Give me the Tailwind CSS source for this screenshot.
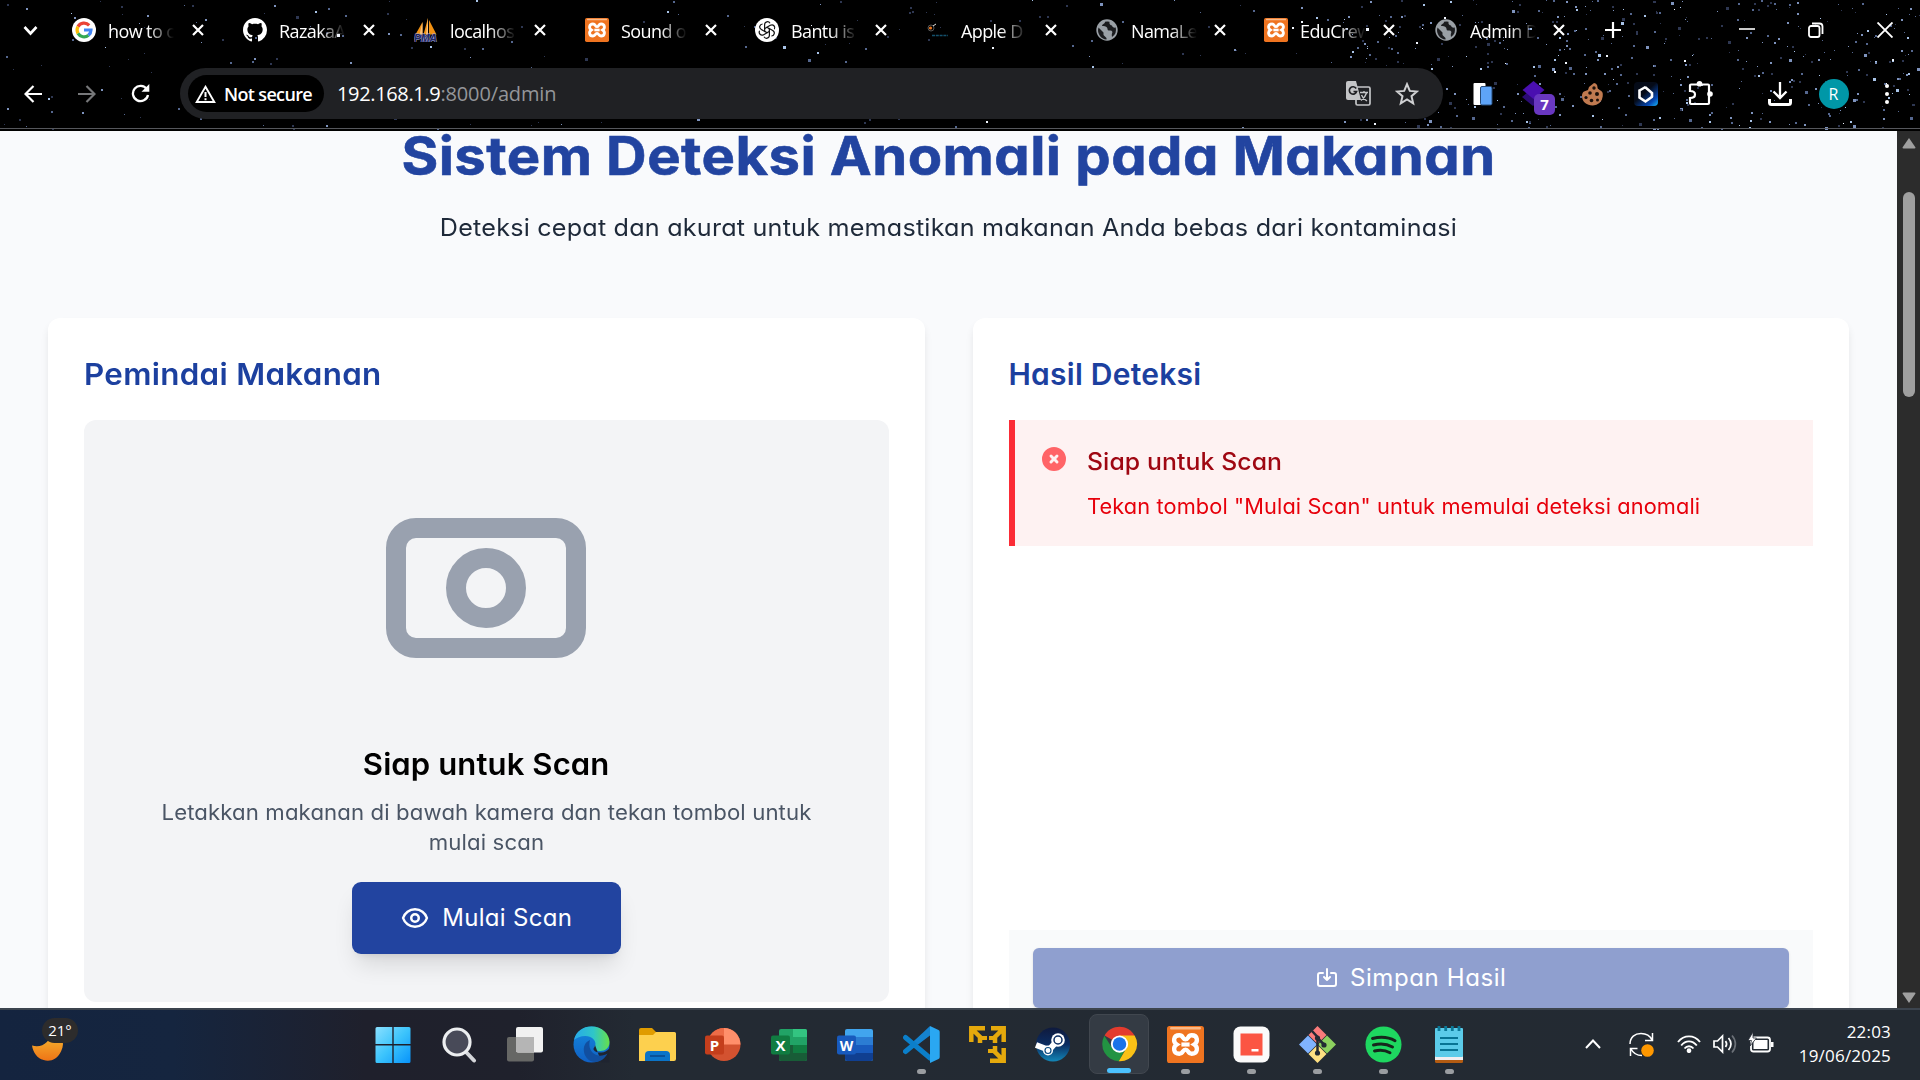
<!DOCTYPE html>
<html lang="id">
<head>
<meta charset="utf-8">
<title>Admin Dashboard</title>
<script src="https://cdn.jsdelivr.net/npm/@tailwindcss/browser@4"></script>
</head>
<body class="w-[1920px] h-[1080px] overflow-hidden flex flex-col bg-black [font-family:'Open_Sans',sans-serif]">

<svg class="hidden">
  <defs>
    <symbol id="x" viewBox="0 0 12 12"><path d="M1 1l10 10M11 1L1 11" stroke="#fff" stroke-width="2.2" fill="none"/></symbol>
    <symbol id="globe" viewBox="0 0 24 24"><circle cx="12" cy="12" r="10.7" fill="#9aa0a6"/><path d="M3.5 9.500l5 5v2.500l3 3v1.500a9.300 9.300 0 0 1-8-12zM10 3.800c0 2.200-2.500 1.800-3 4.200 2 0 4 0 5 1.500 1 1.500 0 3.500 2.500 3 2.500-.5 3.500 1 2.500 3-.5 1.500 0 2.500 0 3.500a8.800 8.800 0 0 0 3.700-9.500C19 10 17 9 17 7.500c-1.500 0-3-1-2.500-3.700A9 9 0 0 0 10 3.800z" fill="#1b1c1f"/></symbol>
    <symbol id="xampp" viewBox="0 0 36 36"><rect width="36" height="36" rx="2.500" fill="#ef7420"/><rect x="3" y="1" width="30" height="2.500" rx="1" fill="#f9b987"/><path d="M12 9c-6 0-6.500 6.500-2.500 9-4 2.500-3.500 9 2.500 9 4 0 3-4 6-4s2 4 6 4c6 0 6.500-6.500 2.500-9 4-2.500 3.500-9-2.500-9-4 0-3 4-6 4s-2-4-6-4z" fill="none" stroke="#fff" stroke-width="4.200"/><path d="M14 18h8" stroke="#fff" stroke-width="4"/></symbol>
  </defs>
</svg>

<header class="relative h-[131px] shrink-0 bg-black border-b border-black overflow-hidden">
  <svg id="stars" class="absolute inset-0 w-full h-[131px]" viewBox="0 0 1920 131"></svg>
  <div class="relative h-[129px] flex flex-col border-b border-[#55575c] text-white">
    <div class="h-[60px] flex items-center">
      <div class="w-[72px] pl-[23px]"><svg class="w-[15px] h-[11px] mt-px" viewBox="0 0 15 11"><path d="M1.500 2l6 6.500 6-6.500" fill="none" stroke="#fff" stroke-width="2.600"/></svg></div>
      <div class="flex text-[18px] tracking-[-0.6px] leading-[26px]">
        <div class="w-[171px] flex items-center">
          <svg class="size-6" viewBox="0 0 24 24"><circle cx="12" cy="12" r="12" fill="#fff"/><g fill="none" stroke-width="3.200"><path d="M17.200 7.300A7 7 0 0 0 6 8.600" stroke="#ea4335"/><path d="M6 8.600a7 7 0 0 0 0 6.800" stroke="#fbbc05"/><path d="M6 15.400a7 7 0 0 0 10.500 1.900" stroke="#34a853"/><path d="M12 12h7a7 7 0 0 1-2.500 5.300" stroke="#4285f4"/></g></svg>
          <span class="ml-3 mt-[3px] w-[66px] overflow-hidden whitespace-nowrap [mask-image:linear-gradient(to_right,black_60%,transparent)]">how to c</span>
          <svg class="size-3 ml-[18px]"><use href="#x"/></svg>
        </div>
        <div class="w-[171px] flex items-center">
          <svg class="size-6" viewBox="0 0 16 16"><path fill="#fff" d="M8 0C3.580 0 0 3.580 0 8c0 3.540 2.290 6.530 5.470 7.590.4.070.55-.17.55-.38 0-.19-.01-.82-.01-1.490-2.010.37-2.530-.49-2.690-.94-.09-.23-.48-.94-.82-1.130-.28-.15-.68-.52-.01-.53.63-.01 1.080.58 1.230.82.72 1.210 1.870.87 2.330.66.07-.52.28-.87.51-1.070-1.780-.2-3.640-.89-3.640-3.950 0-.87.31-1.590.82-2.150-.08-.2-.36-1.020.08-2.120 0 0 .67-.21 2.200.82.64-.18 1.320-.27 2-.27s1.360.09 2 .27c1.530-1.040 2.200-.82 2.200-.82.44 1.100.16 1.920.08 2.120.51.56.82 1.270.82 2.150 0 3.070-1.870 3.750-3.650 3.950.29.25.54.73.54 1.480 0 1.070-.01 1.930-.01 2.200 0 .21.15.46.55.38A8.010 8.010 0 0 0 16 8c0-4.420-3.580-8-8-8z"/></svg>
          <span class="ml-3 mt-[3px] w-[66px] overflow-hidden whitespace-nowrap [mask-image:linear-gradient(to_right,black_60%,transparent)]">RazakaA</span>
          <svg class="size-3 ml-[18px]"><use href="#x"/></svg>
        </div>
        <div class="w-[171px] flex items-center">
          <svg class="size-6" viewBox="0 0 24 24"><path d="M1.500 16.500L8.500 4v12.500zM9.500 16.500L14 0v16.500zM15 16.500V2l7.500 14.500z" fill="#f29111"/><path d="M8.500 4v12.500H5.500zM14 0v16.500h-2z" fill="#f9c27c"/><text x="0" y="24" font-family="Liberation Sans" font-style="italic" font-weight="700" font-size="10" letter-spacing="0" fill="#1d2560" stroke="#9fa6d8" stroke-width="1" paint-order="stroke" textLength="23" lengthAdjust="spacingAndGlyphs">PMA</text></svg>
          <span class="ml-3 mt-[3px] w-[66px] overflow-hidden whitespace-nowrap [mask-image:linear-gradient(to_right,black_60%,transparent)]">localhos</span>
          <svg class="size-3 ml-[18px]"><use href="#x"/></svg>
        </div>
        <div class="w-[170px] flex items-center">
          <svg class="size-6"><use href="#xampp"/></svg>
          <span class="ml-3 mt-[3px] w-[66px] overflow-hidden whitespace-nowrap [mask-image:linear-gradient(to_right,black_60%,transparent)]">Sound o</span>
          <svg class="size-3 ml-[18px]"><use href="#x"/></svg>
        </div>
        <div class="w-[170px] flex items-center">
          <svg class="size-6" viewBox="0 0 24 24"><circle cx="12" cy="12" r="12" fill="#fff"/><g fill="none" stroke="#111" stroke-width="1.200"><path id="petal" d="M12 9.300l-2.400 1.400V6.800c0-3.400 4-4 5.400-1.600"/><use href="#petal" transform="rotate(60 12 12)"/><use href="#petal" transform="rotate(120 12 12)"/><use href="#petal" transform="rotate(180 12 12)"/><use href="#petal" transform="rotate(240 12 12)"/><use href="#petal" transform="rotate(300 12 12)"/></g></svg>
          <span class="ml-3 mt-[3px] w-[66px] overflow-hidden whitespace-nowrap [mask-image:linear-gradient(to_right,black_60%,transparent)]">Bantu is</span>
          <svg class="size-3 ml-[18px]"><use href="#x"/></svg>
        </div>
        <div class="w-[170px] flex items-center">
          <svg class="size-6" viewBox="0 0 24 24"><circle cx="6" cy="10" r="3" fill="none" stroke="#555" stroke-width="1"/><circle cx="5.500" cy="10" r="1.600" fill="#e8741d"/><path d="M8 8l3-2" stroke="#ddd"/><path d="M7 17.500h16" stroke="#14506b" stroke-width="1.600" stroke-dasharray="3 .8"/></svg>
          <span class="ml-3 mt-[3px] w-[66px] overflow-hidden whitespace-nowrap [mask-image:linear-gradient(to_right,black_60%,transparent)]">Apple D</span>
          <svg class="size-3 ml-[18px]"><use href="#x"/></svg>
        </div>
        <div class="w-[169px] flex items-center">
          <svg class="size-6"><use href="#globe"/></svg>
          <span class="ml-3 mt-[3px] w-[66px] overflow-hidden whitespace-nowrap [mask-image:linear-gradient(to_right,black_60%,transparent)]">NamaLe</span>
          <svg class="size-3 ml-[17px]"><use href="#x"/></svg>
        </div>
        <div class="w-[170px] flex items-center">
          <svg class="size-6"><use href="#xampp"/></svg>
          <span class="ml-3 mt-[3px] w-[66px] overflow-hidden whitespace-nowrap [mask-image:linear-gradient(to_right,black_60%,transparent)]">EduCrew</span>
          <svg class="size-3 ml-[17px]"><use href="#x"/></svg>
        </div>
        <div class="w-[170px] flex items-center">
          <svg class="size-6"><use href="#globe"/></svg>
          <span class="ml-3 mt-[3px] w-[66px] overflow-hidden whitespace-nowrap [mask-image:linear-gradient(to_right,black_60%,transparent)]">Admin D</span>
          <svg class="size-3 ml-[17px]"><use href="#x"/></svg>
        </div>
      </div>
      <svg class="size-4 ml-[1px]" viewBox="0 0 16 16"><path d="M8 0v16M0 8h16" stroke="#fff" stroke-width="2.200"/></svg>
      <svg class="w-4 h-4 ml-[118px]" viewBox="0 0 16 16"><path d="M0 7h16" stroke="#fff" stroke-width="1.600"/></svg>
      <svg class="w-4 h-4 ml-[53px]" viewBox="0 0 16 16" fill="none" stroke="#fff" stroke-width="1.800"><rect x="1" y="4" width="10.500" height="11" rx="2"/><path d="M4 1.500h7.500a3 3 0 0 1 3 3V12"/></svg>
      <svg class="w-4 h-4 ml-[53px]" viewBox="0 0 16 16"><path d="M.5.5l15 15M15.500.5l-15 15" stroke="#fff" stroke-width="1.900"/></svg>
    </div>

    <div class="h-[69px] flex items-center">
      <div class="w-[180px] flex items-center pl-6">
        <svg class="w-[18px] h-[18px]" viewBox="0 0 18 18" fill="none" stroke="#fff" stroke-width="2.200"><path d="M18 9H2M9.500 1L1.500 9l8 8"/></svg>
        <svg class="w-[18px] h-[18px] ml-9" viewBox="0 0 18 18" fill="none" stroke="#77787a" stroke-width="2.200"><path d="M0 9h16M8.500 1l8 8-8 8"/></svg>
        <svg class="w-[19px] h-[19px] ml-[35px]" viewBox="0 0 19 19"><path d="M15.800 5.200A7.600 7.600 0 1 0 17 11" fill="none" stroke="#fff" stroke-width="2.300"/><path d="M18.300 0v7.800h-7.800z" fill="#fff"/></svg>
      </div>
      <div class="w-[1263px] h-[51px] rounded-full bg-[#202124] flex items-center pl-2 pr-6">
        <div class="w-[136px] h-[37px] rounded-full bg-black flex items-center pl-[7px]">
          <svg class="w-[21px] h-[18px]" viewBox="0 0 21 18"><path d="M10.500 1.800L19.300 17H1.700z" fill="none" stroke="#fff" stroke-width="1.900"/><path d="M10.500 7v5M10.500 13.300v2" stroke="#fff" stroke-width="2"/></svg>
          <span class="ml-2 mt-px text-[18px] leading-6 font-semibold tracking-[-0.65px] whitespace-nowrap">Not secure</span>
        </div>
        <span class="ml-[13px] mt-px text-[20px] leading-7 whitespace-nowrap tracking-[-0.35px]">192.168.1.9<span class="text-[#94969a] tracking-[-0.14px]">:8000/admin</span></span>
        <svg class="w-[25px] h-[25px] ml-auto" viewBox="0 0 25 25"><rect x="10" y="6" width="14" height="18" rx="1.500" fill="none" stroke="#c4c5c7" stroke-width="1.700"/><path d="M2 0h8l5 19H2a2 2 0 0 1-2-2V2a2 2 0 0 1 2-2z" fill="#c4c5c7"/><path d="M10.200 7.500a3.700 3.700 0 1 0 .4 3H7.500" fill="none" stroke="#202124" stroke-width="1.700"/><path d="M14 11.500h8M18 10v2M20.500 12c-1 3.500-3.500 6-5.500 7.500M15.500 14c1 2.500 3 4.500 5.500 6" stroke="#c4c5c7" stroke-width="1.400" fill="none"/></svg>
        <svg class="w-6 h-6 ml-6" viewBox="0 0 24 24"><path d="M12 2.200l2.800 6.700 7.200.6-5.500 4.700 1.700 7.100L12 17.500l-6.200 3.800 1.700-7.100L2 9.500l7.200-.6z" fill="none" stroke="#cfd0d2" stroke-width="2"/></svg>
      </div>
      <div class="ml-[13px] flex items-center">
        <div class="w-[53px] flex justify-center"><svg class="w-[20px] h-6" viewBox="0 0 20 24"><rect x=".5" y="1" width="12" height="22" rx="1" fill="#fff"/><rect x="7.500" y="4.500" width="11.500" height="18.500" rx="1.500" fill="#5ea4f8" stroke="#274b77"/></svg></div>
        <div class="w-[56px] flex justify-center"><svg class="w-[36px] h-[36px] mt-2 ml-1" viewBox="0 0 36 36"><path d="M12 8l11 9-11 9-11-9z" fill="#2b0b74"/><path d="M12.500 1l11 9-11 9-11-9z" fill="#4a0fb0"/><rect x="13" y="14" width="21" height="21" rx="5" fill="#6937c1"/><text x="23.500" y="30" text-anchor="middle" font-family="Open Sans" font-weight="700" font-size="15" fill="#fff">7</text></svg></div>
        <div class="w-[54px] flex justify-center"><svg class="w-[23px] h-6" viewBox="0 0 23 24"><path d="M13 1c2.500.5 3.500 2 3.500 4.500 0 1.500 1.500 2 3 3 2.500 1.500 2.500 3 2.200 6A9.800 9.800 0 0 1 11.500 23.500C6 23.500 1 20 1 14c0-2 .5-3.500 2-4.500l4-1.500 1-3z" fill="#c07a50"/><g fill="#1a0f0a"><circle cx="13" cy="6" r="1.700"/><circle cx="9" cy="11" r="1.800"/><circle cx="16" cy="12" r="2"/><circle cx="5" cy="15.500" r="1.600"/><circle cx="10.500" cy="18.500" r="1.800"/><circle cx="16.500" cy="18" r="1.500"/></g></svg></div>
        <div class="w-[54px] flex justify-center"><svg class="size-6" viewBox="0 0 24 24"><defs><linearGradient id="bl" x1=".2" y1=".1" x2="1" y2="1"><stop offset=".35" stop-color="#050b18"/><stop offset=".75" stop-color="#0648b4"/><stop offset="1" stop-color="#18b5f5"/></linearGradient></defs><rect width="24" height="24" rx="4" fill="url(#bl)"/><path d="M5.500 8.500L11.500 5M5.500 7.500v8l6 4 7-5" fill="none" stroke="#fff" stroke-width="2.600"/><path d="M11 5l7 6v4" fill="none" stroke="#fff" stroke-width="2.600"/></svg></div>
        <div class="w-[54px] flex justify-center"><svg class="w-[25px] h-[25px]" viewBox="0 0 25 25"><path d="M3 3.500h17a1 1 0 0 1 1 1V22a1 1 0 0 1-1 1H3a1 1 0 0 1-1-1v-5c4 0 5-1.500 5-3.500S6 10 2 10V4.500a1 1 0 0 1 1-1z" fill="none" stroke="#fff" stroke-width="2.200"/><circle cx="11.500" cy="2.800" r="2.800" fill="#fff"/><circle cx="22" cy="13" r="2.800" fill="#fff"/></svg></div>
        <div class="w-[54px] ml-[26px] flex justify-center"><svg class="w-6 h-6" viewBox="0 0 24 24" fill="none" stroke="#fff"><path d="M12 0v15M5.500 9.500L12 16l6.500-6.500" stroke-width="2.300"/><path d="M1.500 17v3.500a2 2 0 0 0 2 2h17a2 2 0 0 0 2-2V17" stroke-width="3"/></svg></div>
        <div class="w-[53px] flex justify-center"><div class="size-[30px] rounded-full bg-[#0097a7] flex items-center justify-center text-[16px] pt-px">R</div></div>
        <div class="w-[54px] flex flex-col items-center gap-1"><i class="size-1 rounded-full bg-white"></i><i class="size-1 rounded-full bg-white"></i><i class="size-1 rounded-full bg-white"></i></div>
      </div>
    </div>
  </div>
</header>

<main class="h-[877px] shrink-0 flex bg-[#f9fafc] overflow-hidden">
  <div class="w-[1897px] h-full overflow-hidden px-12 [font-family:Inter,sans-serif] [font-feature-settings:'cv11']">
    <h1 class="-mt-[7px] text-center text-[53px] leading-[64px] font-bold tracking-[0.4px] scale-x-[1.061] text-[#2244a0] [-webkit-text-stroke:0.6px_#2244a0]">Sistem Deteksi Anomali pada Makanan</h1>
    <p class="mt-[22px] text-center text-[24px] leading-9 tracking-[0.2px] scale-x-[1.048] text-[#1e2939]">Deteksi cepat dan akurat untuk memastikan makanan Anda bebas dari kontaminasi</p>
    <div class="mt-[72px] grid grid-cols-2 gap-12">
      <section class="h-[800px] bg-white rounded-xl shadow-[0_6px_9px_-1px_rgba(0,0,0,0.1)] p-9">
        <h2 class="-mt-px text-[30px] leading-[42px] font-semibold tracking-[0.3px] origin-left scale-x-[1.045] text-[#1c409f]">Pemindai Makanan</h2>
        <div class="mt-[25px] h-[582px] rounded-xl bg-[#f3f4f6] flex flex-col items-center pt-12 text-center">
          <svg class="size-[240px] shrink-0" viewBox="0 0 24 24" fill="none" stroke="#99a1af" stroke-width="2"><rect x="3" y="6" width="18" height="12" rx="2"/><circle cx="12" cy="12" r="3"/></svg>
          <h3 class="mt-[35px] text-[30px] leading-[42px] font-semibold tracking-[0.1px] scale-x-[1.035] text-black">Siap untuk Scan</h3>
          <p class="mt-[13px] text-[21px] leading-[30px] tracking-[0.1px] scale-x-[1.057] text-[#4a5565]">Letakkan makanan di bawah kamera dan tekan tombol untuk<br>mulai scan</p>
          <button class="mt-[24px] w-[269px] h-[72px] rounded-[9px] bg-[#2244a0] shadow-[0_15px_23px_-5px_rgba(0,0,0,0.12),0_6px_9px_-6px_rgba(0,0,0,0.12)] flex items-center justify-center text-white text-[24px] tracking-[0.3px]">
            <svg class="size-[30px] mr-3" viewBox="0 0 24 24" fill="none" stroke="#fff" stroke-width="2" stroke-linecap="round" stroke-linejoin="round"><path d="M15 12a3 3 0 11-6 0 3 3 0 016 0z"/><path d="M2.458 12C3.732 7.943 7.523 5 12 5c4.478 0 8.268 2.943 9.542 7-1.274 4.057-5.064 7-9.542 7-4.477 0-8.268-2.943-9.542-7z"/></svg>
            Mulai Scan
          </button>
        </div>
      </section>
      <section class="h-[800px] bg-white rounded-xl shadow-[0_6px_9px_-1px_rgba(0,0,0,0.1)] p-9">
        <h2 class="-mt-px text-[30px] leading-[42px] font-semibold tracking-[0.25px] text-[#1c409f]">Hasil Deteksi</h2>
        <div class="mt-[25px] h-[126px] bg-[#fef2f2] border-l-[6px] border-[#fb2c36] p-6 flex">
          <svg class="size-[30px] shrink-0" viewBox="0 0 20 20" fill="#ff6467"><path fill-rule="evenodd" clip-rule="evenodd" d="M10 18a8 8 0 100-16 8 8 0 000 16zM8.707 7.293a1 1 0 00-1.414 1.414L8.586 10l-1.293 1.293a1 1 0 101.414 1.414L10 11.414l1.293 1.293a1 1 0 001.414-1.414L11.414 10l1.293-1.293a1 1 0 00-1.414-1.414L10 8.586 8.707 7.293z"/></svg>
          <div class="ml-[18px] whitespace-nowrap">
            <h3 class="text-[24px] leading-9 font-medium tracking-[0.1px] origin-left scale-x-[1.032] text-[#9f0712]">Siap untuk Scan</h3>
            <p class="mt-3 text-[21px] leading-[30px] tracking-[0.1px] origin-left scale-x-[1.037] text-[#e7000b]">Tekan tombol "Mulai Scan" untuk memulai deteksi anomali</p>
          </div>
        </div>
        <div class="mt-[384px] h-[150px] bg-[#f9fafb] px-6 pt-[18px]">
          <button class="w-full h-[60px] rounded-md bg-[#8f9fcf] shadow-sm flex items-center justify-center text-white text-[24px] tracking-[0.6px]">
            <svg class="size-6 mr-[11px]" viewBox="0 0 24 24" fill="none" stroke="#fff" stroke-width="2" stroke-linecap="round" stroke-linejoin="round"><path d="M8 7H5a2 2 0 00-2 2v9a2 2 0 002 2h14a2 2 0 002-2V9a2 2 0 00-2-2h-3M15 11l-3 3m0 0l-3-3m3 3V3"/></svg>
            Simpan Hasil
          </button>
        </div>
      </section>
    </div>
  </div>
  <div class="w-[23px] h-full bg-[#2c2c2c] flex flex-col items-center">
    <svg class="w-3.5 h-3 mt-[6px]" viewBox="0 0 14 12"><path d="M7 1l6.500 9.500a1 1 0 0 1-1 1h-11a1 1 0 0 1-1-1z" fill="#9f9f9f"/></svg>
    <div class="mt-[43px] w-3 h-[205px] rounded-full bg-[#9f9f9f]"></div>
    <svg class="w-3.5 h-3 mt-auto mb-[4px]" viewBox="0 0 14 12"><path d="M7 11L.5 1.500a1 1 0 0 1 1-1h11a1 1 0 0 1 1 1z" fill="#9f9f9f"/></svg>
  </div>
</main>

<footer class="h-[72px] shrink-0 flex items-start border-t-2 border-[#3c444e] bg-[linear-gradient(to_right,#14243f_0%,#15253f_9%,#1f202c_19%,#1f212c_27%,#232a33_33%,#232a32_100%)] text-white">
  <div class="w-[360px] h-[70px] relative">
    <svg class="absolute left-[31px] top-[20px] w-[35px] h-[32px]" viewBox="0 0 36 33"><defs><linearGradient id="mn" x2="0" y2="1"><stop stop-color="#f7c234"/><stop offset="1" stop-color="#ee7416"/></linearGradient></defs><path d="M22 0c9 3 14 12 9 22C27 31 19 33 13 31 6 29 2 23 1 16c10 3 19-3 21-16z" fill="url(#mn)"/></svg>
    <span class="absolute left-[42px] top-[8px] w-[36px] h-[25px] rounded-full bg-[#2d2c2c] text-[15px] leading-[25px] text-center">21°</span>
  </div>
  <div class="flex h-[70px]">
    <div class="w-[66px] pt-[17px] flex flex-col items-center"><svg class="w-[36px] h-[36px]" viewBox="0 0 36 36"><defs><linearGradient id="wn" x2="1" y2="1"><stop stop-color="#8ae0ff"/><stop offset=".5" stop-color="#3cc4fc"/><stop offset="1" stop-color="#0793fb"/></linearGradient></defs><path d="M2 0h15.300v17H.5V1.500A1.500 1.500 0 0 1 2 0zM18.700 0H34a1.500 1.500 0 0 1 1.500 1.500V17H18.700zM.5 18.500h16.800V36H2a1.500 1.500 0 0 1-1.500-1.500zM18.700 18.500h16.800v16A1.500 1.500 0 0 1 34 36H18.700z" fill="url(#wn)"/></svg></div>
    <div class="w-[66px] pt-[17px] flex flex-col items-center"><svg class="w-[36px] h-[36px]" viewBox="0 0 36 36"><path d="M25 25l8 8.500" stroke="#d4d6da" stroke-width="4" stroke-linecap="round"/><circle cx="16" cy="15" r="13" fill="#484a58" stroke="#eceef0" stroke-width="3.200"/></svg></div>
    <div class="w-[66px] pt-[17px] flex flex-col items-center"><svg class="w-[36px] h-[36px]" viewBox="0 0 36 36"><rect x="0" y="10" width="27" height="24.500" rx="2" fill="#666765"/><rect x="9" y="0" width="27" height="25.500" rx="2" fill="#f1f1f1"/><path d="M9 10h18v15.500H11a2 2 0 0 1-2-2z" fill="#b5b5b5"/></svg></div>
    <div class="w-[66px] pt-[16px] flex flex-col items-center"><svg class="w-[37px] h-[37px]" viewBox="0 0 37 37"><defs><linearGradient id="e1"><stop stop-color="#27a9ea"/><stop offset=".55" stop-color="#2fc6c8"/><stop offset="1" stop-color="#66e04a"/></linearGradient><linearGradient id="e2" x2="0" y2="1"><stop stop-color="#1488dd"/><stop offset="1" stop-color="#1060c4"/></linearGradient></defs><circle cx="18.500" cy="18.500" r="18" fill="url(#e2)"/><path d="M1 14C3 5 10 .5 18.500.5 29 .5 36.500 8 36.500 16c0 6-4.500 9-9 9-4 0-6.500-1.500-6.500-3 0-1 1.500-2 1.500-4 0-4-4-8-10-8-5 0-9 2-11.500 4z" fill="url(#e1)"/><path d="M22 19c0 2-1.500 2.500-1.500 4 0 2 4 4 8 3.500 3 0 5-1.500 8-4v14h-8z" fill="#1f2430"/><path d="M17 14c-5 2-7 7-6 12 1 6 6 10 11 10 6 0 10-4 12.500-8.500-4 2.500-9 3-13 .5-5-3-6-9-4.500-14z" fill="#114fa0"/></svg></div>
    <div class="w-[66px] pt-[18px] flex flex-col items-center"><svg class="w-[37px] h-[34px]" viewBox="0 0 37 34"><path d="M0 2a2 2 0 0 1 2-2h11l4 4h18v6H0z" fill="#e09c00"/><path d="M0 7h14l3-3h18.500A1.500 1.500 0 0 1 37 5.500V31a2 2 0 0 1-2 2H0z" fill="#fdd04e"/><path d="M6 33v-6a4 4 0 0 1 4-4h17a4 4 0 0 1 4 4v6z" fill="#0b74c8"/><path d="M11 28h15" stroke="#0a4f94" stroke-width="1.800"/></svg></div>
    <div class="w-[66px] pt-[18px] flex flex-col items-center"><svg class="w-[36px] h-[34px]" viewBox="0 0 36 34"><circle cx="19" cy="16.500" r="16.500" fill="#d35230"/><path d="M19 0a16.500 16.500 0 0 1 16.500 16.500H19z" fill="#ff8f6b"/><path d="M19 0a16.500 16.500 0 0 0-16.500 16.500H19z" fill="#ed6c47"/><rect y="7.500" width="19" height="19" rx="2" fill="#c43e1c"/><text x="9.500" y="22.500" text-anchor="middle" font-family="Open Sans" font-weight="700" font-size="15" fill="#fff">P</text></svg></div>
    <div class="w-[66px] pt-[18px] flex flex-col items-center"><svg class="w-[36px] h-[34px]" viewBox="0 0 36 34"><rect x="8" y="1" width="28" height="32" rx="2" fill="#21a366"/><path d="M22 1h12a2 2 0 0 1 2 2v6H22z" fill="#33c481"/><path d="M8 17h14v8H8z" fill="#185c37"/><path d="M22 17h14v8H22z" fill="#107c41"/><path d="M8 25h28v6a2 2 0 0 1-2 2H10a2 2 0 0 1-2-2z" fill="#185c37"/><rect y="7.500" width="19" height="19" rx="2" fill="#107c41"/><text x="9.500" y="22.500" text-anchor="middle" font-family="Open Sans" font-weight="700" font-size="15" fill="#fff">X</text></svg></div>
    <div class="w-[66px] pt-[18px] flex flex-col items-center"><svg class="w-[36px] h-[34px]" viewBox="0 0 36 34"><rect x="8" y="1" width="28" height="32" rx="2" fill="#41a5ee"/><path d="M8 9h28v8H8z" fill="#2b7cd3"/><path d="M8 17h28v8H8z" fill="#185abd"/><path d="M8 25h28v6a2 2 0 0 1-2 2H10a2 2 0 0 1-2-2z" fill="#103f91"/><rect y="7.500" width="19" height="19" rx="2" fill="#185abd"/><text x="9.500" y="22.500" text-anchor="middle" font-family="Open Sans" font-weight="700" font-size="14" fill="#fff">W</text></svg></div>
    <div class="w-[66px] pt-[16px] flex flex-col items-center"><svg class="w-[37px] h-[37px]" viewBox="0 0 37 37"><path d="M2.500 11.500L27 32M2.500 25.500L27 5" stroke="#0b7fca" stroke-width="5" stroke-linecap="round"/><path d="M27 0l8.500 4a2 2 0 0 1 1.200 2v25a2 2 0 0 1-1.200 2L27 37z" fill="#2aa7f2"/><path d="M27 0v9.500L15 18.500l-4-3.500z" fill="#1583cf"/></svg><i class="mt-[6px] w-[9px] h-[5px] rounded-full bg-[#9a9da1]"></i></div>
    <div class="w-[66px] pt-[16px] flex flex-col items-center"><svg class="w-[37px] h-[37px]" viewBox="0 0 37 37" fill="none" stroke="#e5a90c" stroke-width="4.500"><path d="M2.300 16V2.300H16M3 3l8 8v6M22 2.300h12.700V16M34 3l-8 8v6M34.700 22v12.700H21M34 34l-8-8v-6"/><path d="M11 12h7M20 12h7M19 25h7" stroke-width="4"/></svg></div>
    <div class="w-[66px] pt-[17px] flex flex-col items-center"><svg class="w-[36px] h-[35px]" viewBox="0 0 36 35"><defs><linearGradient id="st" x2="0" y2="1"><stop stop-color="#0f1a3d"/><stop offset=".5" stop-color="#0b2c61"/><stop offset="1" stop-color="#1387b8"/></linearGradient></defs><circle cx="18" cy="17.500" r="17" fill="url(#st)"/><path d="M1 18l13 5 8-9" stroke="#fff" stroke-width="6" fill="none"/><circle cx="13" cy="23.500" r="5" fill="#fff"/><circle cx="23" cy="13" r="6.800" fill="#fff"/><circle cx="23" cy="13" r="4" fill="#fff" stroke="#0b2c61" stroke-width="1.500"/><circle cx="13" cy="23.500" r="3" fill="none" stroke="#0b4a80" stroke-width="1.200"/></svg></div>
    <div class="w-[66px] pt-[4px] flex flex-col items-center"><div class="w-[60px] h-[60px] rounded-lg bg-[#343b44] border border-[#41474f] flex flex-col items-center pt-[11px]"><svg class="w-[37px] h-[37px]" viewBox="0 0 48 48"><path d="M24 24L4.100 12.500A23 23 0 0 1 43.900 12.500z" fill="#e33b2e"/><path d="M3.800 13A23 23 0 0 0 23 47l9.500-17.500L14 29z" fill="#229342"/><path d="M24 12.500h20.200A23 23 0 0 1 23 47l10.500-18z" fill="#fbc116"/><circle cx="24" cy="24" r="11.500" fill="#fff"/><circle cx="24" cy="24" r="9" fill="#1a73e8"/></svg><i class="mt-[6px] w-6 h-[5px] shrink-0 rounded-full bg-[#4cc2ff]"></i></div></div>
    <div class="w-[66px] pt-[16px] flex flex-col items-center"><svg class="w-[37px] h-[37px]"><use href="#xampp"/></svg><i class="mt-[6px] w-[9px] h-[5px] rounded-full bg-[#9a9da1]"></i></div>
    <div class="w-[66px] pt-[16px] flex flex-col items-center"><svg class="w-[37px] h-[37px]" viewBox="0 0 37 37"><rect x=".5" y=".5" width="36" height="36" rx="7" fill="#fafafa"/><rect x="7.500" y="7.500" width="22" height="22" fill="#fb5543"/><rect x="18.500" y="23" width="7" height="2.500" fill="#fff"/></svg><i class="mt-[6px] w-[9px] h-[5px] rounded-full bg-[#9a9da1]"></i></div>
    <div class="w-[66px] pt-[16px] flex flex-col items-center"><svg class="w-[37px] h-[37px]" viewBox="0 0 37 37"><path d="M18.500 0l9 9-9 9-9-9z" fill="#f97b7b"/><path d="M9 9.500l9 9-9 9-9-9z" fill="#80b3ff"/><path d="M28 9.500l9 9-9 9-9-9z" fill="#8cd05f"/><path d="M18.500 19l9 9-9 9-9-9z" fill="#fee082"/><path d="M13 5l5.500 6v17M18.500 12l6.500 6.500" stroke="#232a33" stroke-width="2.500" fill="none"/><circle cx="18.500" cy="12" r="2.600" fill="#232a33"/><circle cx="25" cy="19" r="2.600" fill="#232a33"/><circle cx="18.500" cy="27" r="2.600" fill="#232a33"/></svg><i class="mt-[6px] w-[9px] h-[5px] rounded-full bg-[#9a9da1]"></i></div>
    <div class="w-[66px] pt-[16px] flex flex-col items-center"><svg class="w-[37px] h-[37px]" viewBox="0 0 37 37"><circle cx="18.500" cy="18.500" r="18" fill="#1ed760"/><path d="M7.500 12.500c8-2 16-1.500 22.500 2.300M8.500 19c7-2 13.500-1.200 19 2M9.500 25c6-1.500 11-.8 15.500 1.800" fill="none" stroke="#16261c" stroke-width="3" stroke-linecap="round"/></svg><i class="mt-[6px] w-[9px] h-[5px] rounded-full bg-[#9a9da1]"></i></div>
    <div class="w-[66px] pt-[16px] flex flex-col items-center"><svg class="w-[30px] h-[37px]" viewBox="0 0 30 37"><path d="M1 31h28v4.500a1.500 1.500 0 0 1-1.500 1.500h-25A1.500 1.500 0 0 1 1 35.500z" fill="#b25b12"/><rect x="1" y="27" width="28" height="7" fill="#f1eef0"/><rect x="1" y="2" width="28" height="29" rx="1" fill="#5bcbe9"/><path d="M6 12h18M6 18h18M6 24h18" stroke="#077494" stroke-width="2.200"/><path d="M5 0v5M11.700 0v5M18.300 0v5M25 0v5" stroke="#0b7897" stroke-width="2.800"/></svg><i class="mt-[6px] w-[9px] h-[5px] rounded-full bg-[#9a9da1]"></i></div>
  </div>
  <div class="flex-1 h-[68px] flex items-center pr-[29px]">
    <svg class="ml-[103px] w-4 h-[10px]" viewBox="0 0 16 10"><path d="M1 9l7-7.500L15 9" fill="none" stroke="#fff" stroke-width="2"/></svg>
    <svg class="ml-[28px] w-[25px] h-[25px]" viewBox="0 0 25 25"><path d="M1 12C1 5 6 1.500 12 1.500c5 0 9 2 11 6.500M23.500 1v7.500H16M1.500 24v-7.500h7M2 17c2 4 6 6.500 11 6.500" fill="none" stroke="#fff" stroke-width="1.500"/><circle cx="18.500" cy="18.500" r="6.300" fill="#ff9800"/></svg>
    <svg class="ml-[23px] w-6 h-[18px]" viewBox="0 0 24 18" fill="none" stroke="#fff" stroke-width="1.900"><path d="M1 7C7-.5 17-.5 23 7M4.200 10.500c4.500-5.500 11-5.500 15.600 0M7.500 13.500c2.500-3 6.500-3 9 0"/><circle cx="12" cy="15.700" r="1.400" fill="#fff"/></svg>
    <svg class="ml-[12px] w-[25px] h-[20px]" viewBox="0 0 25 20" fill="none" stroke="#fff" stroke-width="1.700"><path d="M1 7v6h3.500l5 5V2l-5 5z"/><path d="M12.500 7c1.500 2 1.500 4 0 6M15.500 4c3.300 4 3.300 8 0 12"/><path d="M19 1.500c4.500 5 4.500 12 0 17" stroke="#6b7077"/></svg>
    <svg class="ml-[10px] w-[26px] h-[21px] -mt-1" viewBox="0 0 26 21"><rect x="3" y="5.500" width="19" height="14" rx="2.500" fill="none" stroke="#fff" stroke-width="1.800"/><rect x="5.500" y="8" width="14" height="9" fill="#fff"/><rect x="23" y="10" width="2.500" height="5" fill="#fff"/><path d="M5 0L0 8.500h3.500L2 14l6.500-8H5z" fill="#fff" stroke="#232a33" stroke-width=".8"/></svg>
    <div class="ml-auto text-right text-[17px] leading-6 tracking-[0.2px] whitespace-nowrap"><div>22:03</div><div>19/06/2025</div></div>
  </div>
</footer>

<script>
// Starfield of the browser theme, denser toward the right edge.
let seed = 7;
const rnd = () => (seed = (seed * 16807) % 2147483647) / 2147483647;
let out = '';
for (let i = 0; i < 760; i++) {
  const x = Math.floor(1920 * (rnd() < 0.55 ? 1 - 0.3 * rnd() : rnd()));
  const y = Math.floor(rnd() * 129);
  const b = rnd(), s = b > 0.93 ? 3 : b > 0.35 ? 2 : 1;
  const c = ['#2e3752', '#55678f', '#7e93bd', '#a9c4e8', '#f2f7ff'][Math.floor(rnd() * (x > 1300 ? 0.4 + 0.6 * rnd() : rnd()) * 5)];
  out += `<rect x="${x}" y="${y}" width="${s}" height="${s}" fill="${c}"/>`;
}
document.getElementById('stars').innerHTML = out;
</script>
</body>
</html>
